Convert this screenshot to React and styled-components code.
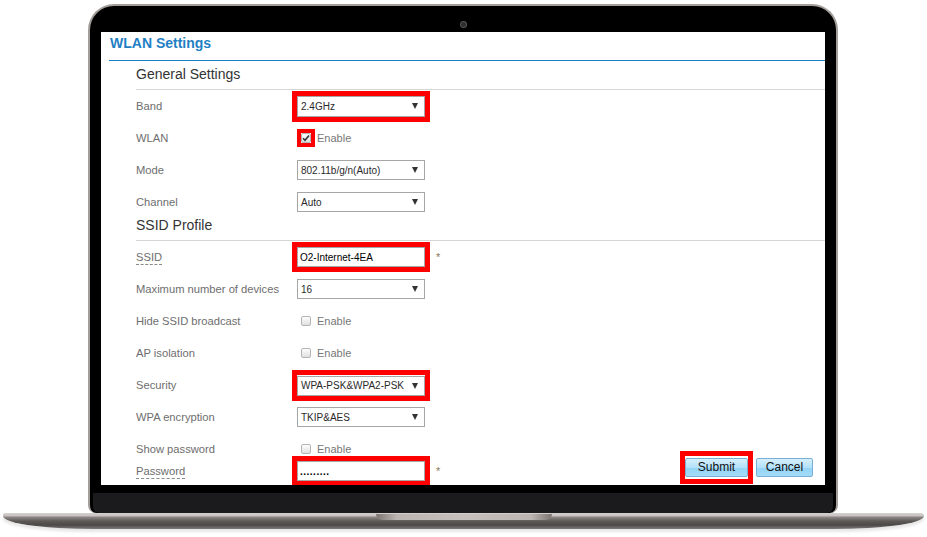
import React from 'react'
import styled, { createGlobalStyle } from 'styled-components'

const GlobalStyle = createGlobalStyle`
	html, body {
		margin: 0;
		padding: 0;
		background: #fff;
	}
	body {
		font-family: "Liberation Sans", Arial, sans-serif;
	}
`

const Page = styled.div`
	width: 927px;
	height: 537px;
	padding-top: 4px;
	box-sizing: border-box;
	overflow: hidden;
`

const Lid = styled.div`
	width: 750px;
	margin-left: 88px;
	box-sizing: border-box;
	background: #000;
	border: 2px solid #a39e9a;
	border-bottom: none;
	border-radius: 26px 26px 8px 8px;
	padding: 16px 11px 0;
	display: flex;
	flex-direction: column;
`

const Camera = styled.div`
	width: 5px;
	height: 5px;
	margin: 0 auto 5px;
	border-radius: 50%;
	background: #2e2e2e;
	box-shadow: 0 0 0 1px #555;
`

const Screen = styled.div`
	height: 453px;
	background: #fff;
	overflow: hidden;
	display: flex;
	flex-direction: column;
`

const Chin = styled.div`
	height: 20px;
	margin: 8px -8px 0;
	background: #1b1a1d;
	border-radius: 0 0 6px 6px;
`

const Base = styled.div`
	height: 16px;
	margin: 0 3px;
	display: flex;
	justify-content: center;
	background: linear-gradient(180deg, #d6d2cf 0px, #c6c1be 3px, #8e8986 4px, #5e5a58 8px, #4c4847 12px, #7e7a78 16px);
	border-radius: 2px 4px 90px 90px / 2px 3px 13px 13px;
	box-shadow: 0 3px 3px rgba(0, 0, 0, 0.1);
`

const Notch = styled.div`
	width: 176px;
	height: 6px;
	margin-top: 1px;
	border-radius: 0 0 7px 7px;
	background: linear-gradient(90deg, #7c7673 0%, #bdb5b2 12%, #c6bfbc 50%, #bdb5b2 88%, #7c7673 100%);
`

const Header = styled.div`
	height: 29px;
	margin-left: 8px;
	box-sizing: border-box;
	border-bottom: 1px solid #1c7fc3;
	padding: 4px 0 0 1px;
	font-size: 14px;
	line-height: 14px;
	font-weight: bold;
	color: #1f7fc4;
`

const Body = styled.div`
	margin-left: 35px;
	display: flex;
	flex-direction: column;
`

const Heading = styled.div`
	padding-top: ${p => p.$top}px;
	padding-bottom: 9px;
	font-size: 14px;
	line-height: 12px;
	color: #333;
	border-bottom: 1px solid #d6d6d6;
`

const Row = styled.div`
	height: ${p => p.$h || 32}px;
	display: flex;
	align-items: center;
`

const Label = styled.div`
	width: 161px;
	flex-shrink: 0;
	font-size: 11.2px;
	color: #6e6e6e;

	span {
		border-bottom: 1px dashed #8a8a8a;
		padding-bottom: 1px;
	}
`

const Highlight = styled.div`
	border: ${p => p.$w || 5}px solid #f00;
	padding: ${p => p.$pad || '0'};
	margin: 0 -${p => p.$w || 5}px;
	display: flex;
	align-items: center;
`

const Select = styled.div`
	width: 128px;
	height: ${p => p.$h || 20}px;
	box-sizing: border-box;
	border: 1px solid #a6a6a6;
	background: #fff;
	padding: 0 6px 0 3px;
	display: flex;
	align-items: center;
	justify-content: space-between;
	font-size: 10px;
	color: #2a2a2a;

	&::after {
		content: "";
		border-left: 3px solid transparent;
		border-right: 3px solid transparent;
		border-top: 6px solid #333;
	}
`

const Input = styled.div`
	width: 128px;
	height: 20px;
	box-sizing: border-box;
	border: 1px solid #a6a6a6;
	background: #fff;
	padding-left: 2px;
	display: flex;
	align-items: center;
	font-size: 10px;
	color: #000;
	font-weight: ${p => (p.$secret ? 'bold' : 'normal')};
	letter-spacing: ${p => (p.$secret ? '0.5px' : '0')};
`

const Required = styled.span`
	margin-left: 11px;
	font-size: 11px;
	color: #8a7a5a;
`

const CheckWrap = styled.div`
	display: flex;
	align-items: center;
	margin-left: 4px;
`

const Box = styled.div`
	width: 10px;
	height: 10px;
	box-sizing: border-box;
	border: 1px solid #b4b4b4;
	border-radius: 2px;
	background: linear-gradient(#fdfdfd, #e0e0e0);
	display: flex;
	align-items: center;
	justify-content: center;
`

const CheckText = styled.span`
	margin-left: 6px;
	font-size: 11px;
	color: #777;
`

const Buttons = styled.div`
	margin-left: auto;
	margin-right: 12px;
	margin-bottom: 8px;
	display: flex;
	align-items: center;
	gap: 8px;
`

const Button = styled.div`
	width: ${p => p.$w}px;
	height: 19px;
	box-sizing: border-box;
	border: 1px solid #79afd4;
	border-radius: 2px;
	background: linear-gradient(#d6effc 0%, #b3e1f9 50%, #94d4f6 51%, #a2dbf8 100%);
	font-size: 12px;
	line-height: 17px;
	text-align: center;
	color: #111;
`

const Check = ({ checked }) => (
	<Box>
		{checked && (
			<svg width="8" height="8" viewBox="0 0 8 8">
				<path d="M1 4.2 L3 6.2 L7 1.5" fill="none" stroke="#333" strokeWidth="1.6" />
			</svg>
		)}
	</Box>
)

const App = () => {
	return (
		<Page>
			<GlobalStyle />
			<Lid>
				<Camera />
				<Screen>
					<Header>WLAN Settings</Header>
					<Body>
						<Heading $top={7}>General Settings</Heading>
						<Row>
							<Label>Band</Label>
							<Highlight>
								<Select $h={21}>2.4GHz</Select>
							</Highlight>
						</Row>
						<Row>
							<Label>WLAN</Label>
							<CheckWrap>
								<Highlight $w={4}>
									<Check checked />
								</Highlight>
								<CheckText>Enable</CheckText>
							</CheckWrap>
						</Row>
						<Row>
							<Label>Mode</Label>
							<Select>802.11b/g/n(Auto)</Select>
						</Row>
						<Row>
							<Label>Channel</Label>
							<Select>Auto</Select>
						</Row>

						<Heading $top={1}>SSID Profile</Heading>
						<Row>
							<Label><span>SSID</span></Label>
							<Highlight>
								<Input>O2-Internet-4EA</Input>
							</Highlight>
							<Required>*</Required>
						</Row>
						<Row>
							<Label>Maximum number of devices</Label>
							<Select>16</Select>
						</Row>
						<Row>
							<Label>Hide SSID broadcast</Label>
							<CheckWrap>
								<Check />
								<CheckText>Enable</CheckText>
							</CheckWrap>
						</Row>
						<Row>
							<Label>AP isolation</Label>
							<CheckWrap>
								<Check />
								<CheckText>Enable</CheckText>
							</CheckWrap>
						</Row>
						<Row>
							<Label>Security</Label>
							<Highlight $pad="1px 0 0">
								<Select>WPA-PSK&amp;WPA2-PSK</Select>
							</Highlight>
						</Row>
						<Row>
							<Label>WPA encryption</Label>
							<Select>TKIP&amp;AES</Select>
						</Row>
						<Row>
							<Label>Show password</Label>
							<CheckWrap>
								<Check />
								<CheckText>Enable</CheckText>
							</CheckWrap>
						</Row>
						<Row $h={12}>
							<Label><span>Password</span></Label>
							<Highlight>
								<Input $secret>.........</Input>
							</Highlight>
							<Required>*</Required>
							<Buttons>
								<Highlight $pad="2px 0">
									<Button $w={63}>Submit</Button>
								</Highlight>
								<Button $w={57}>Cancel</Button>
							</Buttons>
						</Row>
					</Body>
				</Screen>
				<Chin />
			</Lid>
			<Base>
				<Notch />
			</Base>
		</Page>
	)
}

export default App
